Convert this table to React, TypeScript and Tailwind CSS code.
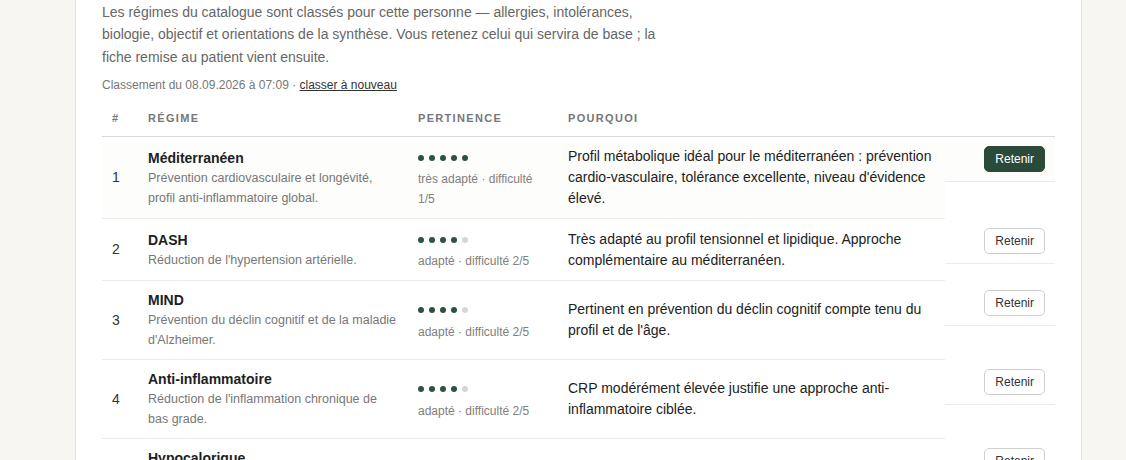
import React from "react";

type Row = {
  n: number;
  name: string;
  desc: string;
  score: number;
  pert: string;
  why: string;
  primary?: boolean;
};

const rows: Row[] = [
  {
    n: 1,
    name: "Méditerranéen",
    desc: "Prévention cardiovasculaire et longévité, profil anti-inflammatoire global.",
    score: 5,
    pert: "très adapté · difficulté 1/5",
    why: "Profil métabolique idéal pour le méditerranéen : prévention cardio-vasculaire, tolérance excellente, niveau d'évidence élevé.",
    primary: true,
  },
  {
    n: 2,
    name: "DASH",
    desc: "Réduction de l'hypertension artérielle.",
    score: 4,
    pert: "adapté · difficulté 2/5",
    why: "Très adapté au profil tensionnel et lipidique. Approche complémentaire au méditerranéen.",
  },
  {
    n: 3,
    name: "MIND",
    desc: "Prévention du déclin cognitif et de la maladie d'Alzheimer.",
    score: 4,
    pert: "adapté · difficulté 2/5",
    why: "Pertinent en prévention du déclin cognitif compte tenu du profil et de l'âge.",
  },
  {
    n: 4,
    name: "Anti-inflammatoire",
    desc: "Réduction de l'inflammation chronique de bas grade.",
    score: 4,
    pert: "adapté · difficulté 2/5",
    why: "CRP modérément élevée justifie une approche anti-inflammatoire ciblée.",
  },
  {
    n: 5,
    name: "Hypocalorique",
    desc: "Perte de poids progressive par déficit calorique modéré, encadrée et adaptée au profil métabolique.",
    score: 3,
    pert: "moyennement adapté · difficulté 3/5",
    why: "IMC légèrement élevé ; à envisager en second temps.",
  },
];

function Dots({ score }: { score: number }) {
  return (
    <div className="flex h-[23px] items-center gap-[5px]">
      {[0, 1, 2, 3, 4].map((i) => (
        <span
          key={i}
          className={
            i < score
              ? "block h-[6px] w-[6px] rounded-full bg-[#2e5140]"
              : "block h-[6px] w-[6px] rounded-full bg-[#d6d6d6]"
          }
        />
      ))}
    </div>
  );
}

export default function App() {
  return (
    <div className="min-h-[460px] bg-[#f8f6f2] font-['Liberation_Sans',Arial,sans-serif]">
      <div className="ml-[75px] min-h-[460px] w-[1007px] border-x border-[#e6e2db] bg-white px-[26px] pt-[1px] pb-6">
        <p className="max-w-[570px] text-[14px] leading-[22.4px] text-[#666666]">
          Les régimes du catalogue sont classés pour cette personne — allergies, intolérances,
          biologie, objectif et orientations de la synthèse. Vous retenez celui qui servira de base ; la
          fiche remise au patient vient ensuite.
        </p>
        <div className="mt-[8px] text-[12px] leading-[18px] text-[#777777]">
          Classement du 08.09.2026 à 07:09 ·{" "}
          <a className="cursor-pointer text-[#333333] underline">classer à nouveau</a>
        </div>
        <table className="mt-[6px] w-full table-fixed border-separate border-spacing-0">
          <colgroup>
            <col className="w-[36px]" />
            <col className="w-[270px]" />
            <col className="w-[150px]" />
            <col className="w-[387px]" />
            <col className="w-[110px]" />
          </colgroup>
          <thead>
            <tr className="text-left text-[11px] leading-[16px] font-bold tracking-[0.12em] text-[#777777] uppercase">
              <th className="border-b border-[#d9d9d9] px-[10px] py-[10px] font-bold">#</th>
              <th className="border-b border-[#d9d9d9] px-[10px] py-[10px] font-bold">Régime</th>
              <th className="border-b border-[#d9d9d9] px-[10px] py-[10px] font-bold">Pertinence</th>
              <th className="border-b border-[#d9d9d9] px-[10px] py-[10px] font-bold">Pourquoi</th>
              <th className="border-b border-[#d9d9d9] px-[10px] py-[10px]"></th>
            </tr>
          </thead>
          <tbody>
            {rows.map((r) => {
              const bg = r.primary ? "bg-[#fdfdfc]" : "";
              return (
                <tr key={r.n}>
                  <td className={`border-b border-[#ebebeb] px-[10px] py-[9px] align-middle text-[14px] text-[#333333] ${bg}`}>
                    {r.n}
                  </td>
                  <td className={`border-b border-[#ebebeb] px-[10px] py-[9px] align-middle ${bg}`}>
                    <div className="text-[14px] leading-[20px] font-bold text-[#1e1e1e]">{r.name}</div>
                    <div className="text-[12.5px] leading-[20px] text-[#777777]">{r.desc}</div>
                  </td>
                  <td className={`border-b border-[#ebebeb] px-[10px] py-[9px] align-middle ${bg}`}>
                    <Dots score={r.score} />
                    <div className="text-[12px] leading-[20px] text-[#808080]">{r.pert}</div>
                  </td>
                  <td className={`border-b border-[#ebebeb] py-[9px] pr-[8px] pl-[10px] align-middle text-[14px] leading-[21px] text-[#222222] ${bg}`}>
                    {r.why}
                  </td>
                  <td className="p-0 align-top">
                    <div className={`flex justify-end border-b border-[#ebebeb] px-[10px] py-[9px] ${bg}`}>
                      {r.primary ? (
                        <button className="rounded-[5px] border border-[#2b4a39] bg-[#2b4a39] px-[10px] py-[4px] text-[12px] leading-[16px] text-white">
                          Retenir
                        </button>
                      ) : (
                        <button className="rounded-[5px] border border-[#cfcfcf] bg-white px-[10px] py-[4px] text-[12px] leading-[16px] text-[#333333]">
                          Retenir
                        </button>
                      )}
                    </div>
                  </td>
                </tr>
              );
            })}
          </tbody>
        </table>
      </div>
    </div>
  );
}
